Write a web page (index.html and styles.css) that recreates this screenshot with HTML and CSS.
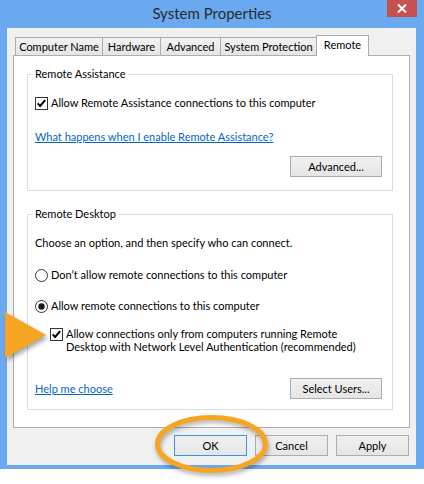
FILE: index.html
```html
<!DOCTYPE html>
<html>
<head>
<meta charset="utf-8">
<title>System Properties</title>
<link rel="stylesheet" href="styles.css">
</head>
<body>
<div class="window">
  <div class="titlebar">
    <div class="title">System Properties</div>
    <div class="close"><svg width="10" height="9" viewBox="0 0 10 9"><path d="M1 .5 L9 8.5 M9 .5 L1 8.5" stroke="#fff" stroke-width="2"/></svg></div>
  </div>
  <div class="client">
    <div class="tabs">
      <div class="tab t1">Computer Name</div>
      <div class="tab t2">Hardware</div>
      <div class="tab t3">Advanced</div>
      <div class="tab t4">System Protection</div>
      <div class="tab t5 active">Remote</div>
    </div>
    <div class="panel">
      <fieldset class="group g1">
        <legend>Remote Assistance</legend>
        <div class="opt">
          <svg class="box" width="13" height="13" viewBox="0 0 13 13"><rect x=".5" y=".5" width="12" height="12" fill="#fff" stroke="#333"/><polyline points="2.6,6.4 5.1,9 10.2,3.2" fill="none" stroke="#000" stroke-width="2"/></svg>
          <span>Allow Remote Assistance connections to this computer</span>
        </div>
        <a class="link l1">What happens when I enable Remote Assistance?</a>
        <div class="btnrow r1"><button class="btn wide">Advanced...</button></div>
      </fieldset>
      <fieldset class="group g2">
        <legend>Remote Desktop</legend>
        <div class="text">Choose an option, and then specify who can connect.</div>
        <div class="opt o1">
          <svg class="box" width="13" height="13" viewBox="0 0 13 13"><circle cx="6.5" cy="6.5" r="6" fill="#fff" stroke="#333"/></svg>
          <span>Don’t allow remote connections to this computer</span>
        </div>
        <div class="opt o2">
          <svg class="box" width="13" height="13" viewBox="0 0 13 13"><circle cx="6.5" cy="6.5" r="6" fill="#fff" stroke="#333"/><circle cx="6.5" cy="6.5" r="3.2" fill="#1a1a1a"/></svg>
          <span>Allow remote connections to this computer</span>
        </div>
        <div class="nla">
          <svg class="box" width="13" height="13" viewBox="0 0 13 13"><rect x=".5" y=".5" width="12" height="12" fill="#fff" stroke="#333"/><polyline points="2.6,6.4 5.1,9 10.2,3.2" fill="none" stroke="#000" stroke-width="2"/></svg>
          <div class="nla-text">
            <div class="line">Allow connections only from computers running Remote</div>
            <div class="line">Desktop with Network Level Authentication (recommended)</div>
          </div>
        </div>
        <div class="btnrow r2">
          <a class="link">Help me choose</a>
          <button class="btn wide">Select Users...</button>
        </div>
      </fieldset>
    </div>
    <div class="dialog-buttons">
      <button class="btn dlg default">OK</button>
      <button class="btn dlg">Cancel</button>
      <button class="btn dlg">Apply</button>
    </div>
  </div>
</div>
<svg class="arrow" width="60" height="70" viewBox="0 0 60 70"><polygon points="5,12 46,35 5,58" fill="#f6a522"/></svg>
<svg class="ring" width="128" height="78" viewBox="0 0 128 78"><ellipse cx="63.5" cy="36" rx="54" ry="26.5" fill="none" stroke="#f6a522" stroke-width="5"/></svg>
</body>
</html>
```

FILE: styles.css
```css
* { box-sizing: border-box; }
html, body { margin: 0; padding: 0; background: #fff; }
body {
  font-family: "Segoe UI", Lato, "Liberation Sans", sans-serif;
  font-size: 11px;
  color: #000;
  position: relative;
  width: 424px;
  height: 484px;
  overflow: hidden;
}
.window {
  width: 424px;
  height: 469px;
  background: #6aa8f0;
  padding: 0 8px 4px 7px;
  display: flex;
  flex-direction: column;
}
.titlebar {
  height: 28px;
  display: flex;
  align-items: flex-start;
  margin-left: -7px;
  margin-right: -1px;
  flex: none;
}
.title {
  flex: 1;
  text-align: center;
  padding-left: 37px;
  font-size: 15px;
  line-height: 26px;
  color: #2b2b2b;
}
.close {
  width: 30px;
  height: 17px;
  background: #c75050;
  display: flex;
  align-items: center;
  justify-content: center;
}
.client {
  flex: none;
  height: 437px;
  background: #f0f0f0;
  padding-top: 7px;
  display: flex;
  flex-direction: column;
}
.tabs {
  display: flex;
  align-items: flex-end;
  height: 20px;
  padding-left: 8px;
  position: relative;
  z-index: 1;
}
.tab {
  height: 18px;
  border: 1px solid #acacac;
  border-bottom: none;
  background: linear-gradient(#f2f2f2, #e5e5e5);
  text-align: center;
  line-height: 17px;
  white-space: nowrap;
  margin-left: -1px;
}
.t1 { width: 88px; margin-left: 0; }
.t2 { width: 59px; }
.t3 { width: 61px; }
.t4 { width: 97px; }
.t5 { width: 53px; }
.tab.active {
  height: 21px;
  margin-bottom: -1px;
  background: #fff;
}
.panel {
  margin-left: 6px;
  width: 397px;
  height: 373px;
  border: 1px solid #adadad;
  background: #fff;
  padding: 10px 16px 0 13px;
  flex: none;
}
.group {
  border: 1px solid #dcdcdc;
  margin: 0;
  padding: 13px 10px 13px 7px;
  min-width: 0;
}
.g2 {
  margin-top: 15px;
  padding-bottom: 10px;
}
legend {
  padding: 0 2px;
  margin-left: -2px;
  line-height: 16px;
}
.opt {
  display: flex;
  align-items: center;
  gap: 3px;
  height: 16px;
  line-height: 16px;
  white-space: nowrap;
}
.box { flex: none; display: block; }
.link {
  display: block;
  width: fit-content;
  color: #0066cc;
  text-decoration: underline;
  line-height: 16px;
  white-space: nowrap;
}
.l1 { margin-top: 18px; }
.btnrow {
  display: flex;
  justify-content: flex-end;
  align-items: center;
  height: 21px;
}
.r1 { margin-top: 11px; }
.r2 { margin-top: 25px; justify-content: space-between; }
.text { line-height: 16px; white-space: nowrap; }
.o1 { margin-top: 16px; }
.o2 { margin-top: 15px; }
.nla {
  margin-top: 13px;
  display: flex;
  align-items: flex-start;
  gap: 3px;
  padding-left: 15px;
  height: 26px;
  white-space: nowrap;
}
.nla .box { margin-top: 1px; }
.line { height: 13px; line-height: 13px; }
.btn {
  height: 21px;
  border: 1px solid #acacac;
  background: linear-gradient(#f0f0f0, #e5e5e5);
  font: inherit;
  color: #000;
  padding: 0;
  margin: 0;
  line-height: 19px;
}
.wide { width: 92px; }
.dialog-buttons {
  margin-top: 7px;
  display: flex;
  justify-content: flex-end;
  gap: 8px;
  padding-right: 7px;
}
.dlg { width: 73px; }
.default { border-color: #3c94e6; }
.arrow {
  position: absolute;
  left: 0;
  top: 300px;
  filter: drop-shadow(2px 3px 2px rgba(0, 0, 0, .35));
}
.ring {
  position: absolute;
  left: 148px;
  top: 408px;
  filter: drop-shadow(1px 3px 2px rgba(0, 0, 0, .3));
}
```
